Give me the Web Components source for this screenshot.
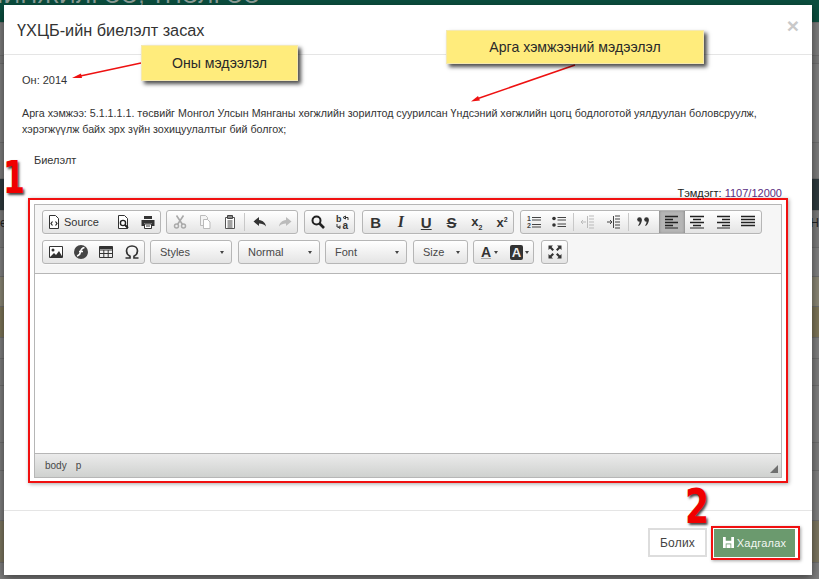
<!DOCTYPE html>
<html>
<head>
<meta charset="utf-8">
<title>Биелэлт засах</title>
<style>
  html, body { margin: 0; padding: 0; width: 819px; height: 579px; overflow: hidden; background: #7f7f7f; font-family: "Liberation Sans", Arial, sans-serif; }
</style>
</head>
<body>
<page-backdrop></page-backdrop>
<edit-modal>
  <span slot="title">ҮХЦБ-ийн биелэлт засах</span>
  <div class="year" style="margin-bottom:17px">Он: 2014</div>
  <div style="font-size:10.7px;line-height:16px;margin-bottom:15px">Арга хэмжээ: 5.1.1.1.1. төсвийг Монгол Улсын Мянганы хөгжлийн зорилтод суурилсан Үндсэний хөгжлийн цогц бодлоготой уялдуулан боловсруулж, хэрэгжүүлж байх эрх зүйн зохицуулалтыг бий болгох;</div>
  <div style="margin-left:12px;line-height:16px;margin-bottom:19px">Биелэлт</div>
  <div style="text-align:right;font-size:11px;line-height:13px;color:#222;padding-right:12px;margin-bottom:-2px">Тэмдэгт: <span style="color:#5a2d82">1107/12000</span></div>
  <rich-editor></rich-editor>
  <modal-button slot="footer">Болих</modal-button>
  <modal-button slot="footer" primary>Хадгалах</modal-button>
</edit-modal>
<note-layer></note-layer>

<script>
const icons = {
  doc: '<path d="M3.5 1.5h6l3 3v10h-9z" fill="#fff" stroke="#333"/><path d="M6.5 7.5l-1.5 2 1.5 2M9.5 7.5l1.5 2-1.5 2" fill="none" stroke="#222" stroke-width="1.2"/>',
  preview: '<path d="M3.5 1.5h6l3 3v10h-9z" fill="#fff" stroke="#333"/><circle cx="8" cy="9" r="2.6" fill="none" stroke="#222" stroke-width="1.4"/><path d="M10 11l3 3" stroke="#222" stroke-width="2"/>',
  print: '<path d="M4 2h8v3H4z" fill="#333"/><path d="M1.5 6h13v6H12V9.500H4V12H1.500z" fill="#333"/><path d="M4.500 10h7v4.500h-7z" fill="#fff" stroke="#333"/><path d="M6 12h4" stroke="#333"/>',
  cut: '<circle cx="4.500" cy="12" r="2" fill="none" stroke="#aaa" stroke-width="1.500"/><circle cx="11.500" cy="12" r="2" fill="none" stroke="#aaa" stroke-width="1.500"/><path d="M5.500 10.500L11.500 1.500M10.500 10.500L4.500 1.500" stroke="#aaa" stroke-width="1.600"/>',
  copy: '<path d="M3.500 1.500h5l2 2v8h-7z" fill="#f4f4f4" stroke="#bbb"/><path d="M6.500 5.500h4l2.500 2.500v6.500h-6.500z" fill="#fff" stroke="#bbb"/>',
  paste: '<path d="M3.500 3.500h9v11h-9z" fill="#fff" stroke="#555"/><path d="M5.500 1.500h5v3h-5z" fill="#888" stroke="#444"/><path d="M5.500 7h5M5.500 9h5M5.500 11h5M5.500 13h5" stroke="#444"/>',
  undo: '<path d="M7 3L1.500 7.500 7 12V9.500c3 0 5 .8 7 3-.4-3.500-3-6-7-6.500z" fill="#333"/>',
  redo: '<path d="M9 3l5.500 4.500L9 12V9.500c-3 0-5 .8-7 3 .4-3.500 3-6 7-6.500z" fill="#bbb"/>',
  find: '<circle cx="6.500" cy="6.500" r="4" fill="none" stroke="#222" stroke-width="2"/><path d="M9.500 9.500l4.500 4.500" stroke="#222" stroke-width="2.600"/>',
  replace: '<text x="1" y="8" font-size="9" font-weight="700" fill="#333" font-family="Liberation Sans">b</text><text x="7.500" y="15" font-size="10" font-weight="700" fill="#333" font-family="Liberation Sans">a</text><path d="M8 3.500l2.500-1.500v3zM10 3.500h3V6M2 10v3h3M5 11.500v3l-2-1.500" fill="none" stroke="#333"/>',
  ol: '<text x="1" y="7" font-size="7" font-weight="700" fill="#444" font-family="Liberation Sans">1</text><text x="1" y="14" font-size="7" font-weight="700" fill="#444" font-family="Liberation Sans">2</text><path d="M6 3.500h9M6 6h9M6 10.500h9M6 13h9" stroke="#444"/>',
  ul: '<circle cx="3" cy="4.500" r="1.800" fill="#333"/><circle cx="3" cy="11" r="1.800" fill="#333"/><path d="M6.500 3.500h8.500M6.500 6h8.500M6.500 10h8.500M6.500 12.500h8.500" stroke="#444"/>',
  outdent: '<path d="M9 2h5M9 5h5M9 8h5M9 11h5M9 14h5" stroke="#bbb"/><path d="M7.500 2v12" stroke="#bbb"/><path d="M6 8H1M3 6L1 8l2 2" fill="none" stroke="#bbb"/>',
  indent: '<path d="M9 2h5M9 5h5M9 8h5M9 11h5M9 14h5" stroke="#444"/><path d="M7.500 2v12" stroke="#444"/><path d="M1 8h5M4 6l2 2-2 2" fill="none" stroke="#444"/>',
  quote: '<circle cx="4.500" cy="5.500" r="2.300" fill="#333"/><path d="M6.800 5.500c0 3-1 5-3 6.500l-.7-.7c1-1 1.500-2.500 1.500-4z" fill="#333"/><circle cx="11.500" cy="5.500" r="2.300" fill="#333"/><path d="M13.800 5.500c0 3-1 5-3 6.500l-.7-.7c1-1 1.500-2.500 1.500-4z" fill="#333"/>',
  left: '<path d="M1 2.500h13M1 5.500h8M1 8.500h13M1 11.500h8" stroke="#222" stroke-width="1.300"/><path d="M1 14h13" stroke="#222"/>',
  center: '<path d="M1 2.500h14M4 5.500h8M1 8.500h14M4 11.500h8" stroke="#222" stroke-width="1.300"/><path d="M1 14h14" stroke="#222"/>',
  right: '<path d="M2 2.500h13M7 5.500h8M2 8.500h13M7 11.500h8" stroke="#222" stroke-width="1.300"/><path d="M2 14h13" stroke="#222"/>',
  justify: '<path d="M1 2.500h14M1 5.500h14M1 8.500h14M1 11.500h14" stroke="#222" stroke-width="1.500"/>',
  image: '<path d="M1.500 2.500h13v11h-13z" fill="#fff" stroke="#333"/><circle cx="5" cy="6" r="1.500" fill="#333"/><path d="M2 13l4-4 2 2 3-4 3.500 6z" fill="#333"/>',
  flash: '<circle cx="8" cy="8" r="7" fill="#444"/><path d="M11.500 3.500C8.500 4 8 5.500 7.500 8S6 11.500 4 12" fill="none" stroke="#fff" stroke-width="1.500"/><path d="M6 7.500h4" stroke="#fff" stroke-width="1.300"/>',
  table: '<path d="M1.500 2.500h13v11h-13zM1.500 6h13M1.500 9.500h13M5.800 6v7.500M10.200 6v7.500" fill="none" stroke="#333"/><path d="M1.500 2.500h13V5h-13z" fill="#333"/>',
  omega: '<path d="M1.500 14h4.500v-1.800C3.800 11 2.500 9 2.500 7c0-3 2.300-5 5.500-5s5.500 2 5.500 5c0 2-1.300 4-3.500 5.200V14h4.500" fill="none" stroke="#333" stroke-width="1.700"/>',
  max: '<path d="M1.500 1.500h4.500L4.500 3l2.500 2.500L5.500 7 3 4.500 1.500 6zM14.500 1.500H10L11.500 3 9 5.500 10.500 7 13 4.500 14.500 6zM1.500 14.500H6L4.500 13 7 10.500 5.500 9 3 11.500 1.500 10zM14.500 14.500H10l1.500-1.500L9 10.500 10.500 9l2.500 2.500 1.500-1.500z" fill="#333"/>'
};

class PageBackdrop extends HTMLElement {
  constructor() {
    super();
    this.attachShadow({ mode: "open" });
  }
  connectedCallback() {
    // what shows of the page behind the dialog
    const rows = [
      [39, "#0b4f3f"], [33, "#7d7d7d"], [8, "#7a7a7a"], [79, "#7f7f7f"], [36, "#7c7c7c"],
      [32, "#2e3a3e"], [37, "#7b7b7b"], [29, "#808080"], [30, "#8a8674"], [31, "#7d7558"],
      [21, "#7f7f7f"], [27, "#7d7d7d"], [57, "#7f7f7f"], [28, "#7d7d7d"], [50, "#7f7f7f"], [42, "#7c7660"]
    ];
    this.shadowRoot.innerHTML = `
      <style>
        :host { display: block; width: 819px; height: 579px; overflow: hidden; position: relative; }
        .row { border-bottom: 1px solid #6e6e6e; box-sizing: border-box; }
        .head { font: 23px/23px "Liberation Sans", sans-serif; color: #8f9f99; white-space: nowrap; margin: -16px 0 0 -18px; letter-spacing: .4px; }
        .edge { display: flex; justify-content: space-between; font-size: 12px; color: #222; padding-right: 0; }
      </style>
      ${rows.map(([h, c], i) => `<div class="row" style="height:${h}px;background:${c}">
        ${i === 0 ? '<div class="head">ШИНЖИЛГЭЭ, ҮНЭЛГЭЭ</div>' : ""}
        ${i === 6 ? '<div class="edge" style="line-height:24px"><span>е</span><span>Н</span></div>' : ""}
      </div>`).join("")}`;
  }
}

class EditModal extends HTMLElement {
  constructor() {
    super();
    this.attachShadow({ mode: "open" });
    this.shadowRoot.innerHTML = `
      <style>
        :host { position: absolute; left: 4px; top: 5px; width: 808px; height: 570px; background: #fff; display: flex; flex-direction: column; box-shadow: 0 3px 9px rgba(0,0,0,.5); color: #333; font: 11px/16px "Liberation Sans", sans-serif; }
        header { height: 50px; flex: none; box-sizing: border-box; border-bottom: 1px solid #e5e5e5; padding: 15px 13px 0 13px; display: flex; justify-content: space-between; }
        h4 { margin: 0; font-size: 16.3px; font-weight: 400; line-height: 21px; color: #333; }
        .close { font-size: 21px; font-weight: 700; line-height: 12px; color: #c9c9c9; }
        main { flex: 1; padding: 17px 18px 0 18px; }
        footer { height: 65px; flex: none; box-sizing: border-box; border-top: 1px solid #e5e5e5; padding-top: 17px; padding-right: 12px; display: flex; justify-content: flex-end; gap: 4px; }
      </style>
      <header><h4><slot name="title"></slot></h4><span class="close">×</span></header>
      <main><slot></slot></main>
      <footer><slot name="footer"></slot></footer>`;
  }
}

class ModalButton extends HTMLElement {
  constructor() {
    super();
    this.attachShadow({ mode: "open" });
  }
  connectedCallback() {
    const primary = this.hasAttribute("primary");
    this.shadowRoot.innerHTML = `
      <style>
        :host { display: block; }
        .frame { display: block; }
        :host([primary]) .frame { border: 2px solid #f01010; padding: 1px 3px 1px 1px; margin-top: -2px; box-shadow: 1px 1px 3px rgba(0,0,0,.35); }
        .btn { box-sizing: border-box; display: flex; align-items: center; justify-content: center; gap: 3px; height: 29px; width: 59px; border: 2px solid #ddd; background: #fff; color: #444; font-size: 12px; letter-spacing: .2px; }
        :host([primary]) .btn { width: 81px; height: 28px; background: #6b9a6e; border-color: #6b9a6e; color: #f2f6f2; font-size: 11px; }
        svg { width: 11px; height: 11px; margin-top: -2px; }
      </style>
      <div class="frame"><div class="btn">
        ${primary ? '<svg viewBox="0 0 12 12"><path d="M0 0h12v12H0z" fill="#fff"/><path d="M3 0h6v4H3zM3 7h6v5H3z" fill="#6b9a6e"/><path d="M3.800 8h4.400v4H3.800z" fill="#fff"/></svg>' : ""}
        <slot></slot></div></div>`;
  }
}

class CkButton extends HTMLElement {
  constructor() {
    super();
    this.attachShadow({ mode: "open" });
  }
  connectedCallback() {
    const name = this.getAttribute("icon");
    this.shadowRoot.innerHTML = `
      <style>
        :host { display: flex; align-items: center; justify-content: center; height: 22px; width: var(--w, 25.300px); flex: none; color: #333; }
        :host([active]) { background: #b5b5b5; box-shadow: inset 0 0 3px rgba(0,0,0,.4); margin: -1px 0; height: 24px; }
        svg { width: 16px; height: 16px; display: block; }
      </style>
      ${name ? `<svg viewBox="0 0 16 16">${icons[name]}</svg>` : ""}<slot></slot>`;
  }
}

class CkGroup extends HTMLElement {
  constructor() {
    super();
    this.attachShadow({ mode: "open" });
    this.shadowRoot.innerHTML = `
      <style>
        :host { display: flex; align-items: center; height: 24px; box-sizing: border-box; border: 1px solid #b6b6b6; border-radius: 3px; background: linear-gradient(#fff, #e4e4e4); box-shadow: 0 1px 0 rgba(255,255,255,.5); overflow: hidden; flex: none; }
      </style><slot></slot>`;
  }
}

class CkCombo extends HTMLElement {
  constructor() {
    super();
    this.attachShadow({ mode: "open" });
    this.shadowRoot.innerHTML = `
      <style>
        :host { display: flex; align-items: center; justify-content: space-between; height: 24px; box-sizing: border-box; border: 1px solid #b6b6b6; border-radius: 3px; background: linear-gradient(#fff, #e4e4e4); padding: 0 7px 0 9px; font-size: 11px; color: #484848; flex: none; }
        i { width: 0; height: 0; border: 2.500px solid transparent; border-top: 3px solid #444; border-bottom: 0; }
      </style><slot></slot><i></i>`;
  }
}

class RichEditor extends HTMLElement {
  constructor() {
    super();
    this.attachShadow({ mode: "open" });
    const sep = '<b class="sep"></b>';
    this.shadowRoot.innerHTML = `
      <style>
        :host { display: block; box-sizing: border-box; margin: 0 6px; width: 760px; height: 285px; border: 2px solid #f01010; padding: 4px 4px 3px 4px; box-shadow: 1px 1px 4px rgba(0,0,0,.35); }
        .box { height: 100%; box-sizing: border-box; border: 1px solid #b6b6b6; display: flex; flex-direction: column; }
        .tools { height: 69px; flex: none; box-sizing: border-box; background: #f6f6f6; border-bottom: 1px solid #b6b6b6; padding: 5px 0 0 7px; display: flex; flex-direction: column; gap: 6px; font: 11px "Liberation Sans", sans-serif; }
        .line { display: flex; gap: 5px; }
        .sep { width: 1px; height: 18px; margin: 0 1.500px; background: #c8c8c8; flex: none; display: block; }
        .area { flex: 1; background: #fff; }
        .status { height: 24px; flex: none; background: linear-gradient(#ebebeb, #cfd1cf); border-top: 1px solid #b6b6b6; box-sizing: border-box; padding-left: 10px; display: flex; align-items: center; justify-content: space-between; gap: 9px; font: 10px "Liberation Sans", sans-serif; color: #484848; }
        .path { display: flex; gap: 9px; }
        .grip { width: 0; height: 0; border-style: solid; border-width: 0 0 8px 8px; border-color: transparent transparent #6f6f6f transparent; margin: 7px 3px 0 0; }
        .src { --w: 67px; gap: 2px; justify-content: flex-start; padding-left: 3px; box-sizing: border-box; }
        .mark { font: 700 15px "Liberation Sans", sans-serif; color: #333; }
      </style>
      <div class="box">
        <div class="tools">
          <div class="line">
            <ck-group style="width:119px"><ck-button class="src" icon="doc">Source</ck-button><ck-button icon="preview"></ck-button><ck-button icon="print"></ck-button></ck-group>
            <ck-group style="width:132px"><ck-button icon="cut"></ck-button><ck-button icon="copy"></ck-button><ck-button icon="paste"></ck-button>${sep}<ck-button icon="undo"></ck-button><ck-button icon="redo"></ck-button></ck-group>
            <ck-group style="width:51px;margin-left:1px"><ck-button icon="find"></ck-button><ck-button icon="replace"></ck-button></ck-group>
            <ck-group style="width:152px;margin-left:2px">
              <ck-button><span class="mark">B</span></ck-button>
              <ck-button><span class="mark" style="font:italic 700 16px 'Liberation Serif',serif">I</span></ck-button>
              <ck-button><span class="mark" style="text-decoration:underline">U</span></ck-button>
              <ck-button><span class="mark" style="text-decoration:line-through">S</span></ck-button>
              <ck-button><span class="mark" style="font-size:13px">x<sub style="font-size:7px">2</sub></span></ck-button>
              <ck-button><span class="mark" style="font-size:13px">x<sup style="font-size:7px;vertical-align:5px;line-height:0">2</sup></span></ck-button>
            </ck-group>
            <ck-group style="width:242px;margin-left:1px">
              <ck-button icon="ol"></ck-button><ck-button icon="ul"></ck-button>${sep}<ck-button icon="outdent"></ck-button><ck-button icon="indent"></ck-button>${sep}<ck-button icon="quote" style="margin-right:4px"></ck-button>
              <ck-button icon="left" active></ck-button><ck-button icon="center"></ck-button><ck-button icon="right"></ck-button><ck-button icon="justify"></ck-button>
            </ck-group>
          </div>
          <div class="line">
            <ck-group style="width:103px"><ck-button icon="image"></ck-button><ck-button icon="flash"></ck-button><ck-button icon="table"></ck-button><ck-button icon="omega"></ck-button></ck-group>
            <ck-combo style="width:82px">Styles</ck-combo>
            <ck-combo style="width:82px;margin-left:1px">Normal</ck-combo>
            <ck-combo style="width:82px">Font</ck-combo>
            <ck-combo style="width:55px;margin-left:1px">Size</ck-combo>
            <ck-group style="width:61px">
              <ck-button style="--w:31px"><span class="mark" style="font-size:14px;text-decoration:underline;text-decoration-color:#aaa;margin-right:3px">A</span><i style="border:2.500px solid transparent;border-top:3px solid #444;border-bottom:0"></i></ck-button>
              <ck-button style="--w:29px"><span class="mark" style="font-size:13px;line-height:15px;background:#333;color:#eee;padding:0 2px;border-radius:2px;margin-right:2px">A</span><i style="border:2.500px solid transparent;border-top:3px solid #444;border-bottom:0"></i></ck-button>
            </ck-group>
            <ck-group style="width:27px;margin-left:2px"><ck-button icon="max"></ck-button></ck-group>
          </div>
        </div>
        <div class="area"></div>
        <div class="status"><div class="path"><span>body</span><span>p</span></div><div class="grip"></div></div>
      </div>`;
  }
}

class NoteLayer extends HTMLElement {
  constructor() {
    super();
    this.attachShadow({ mode: "open" });
    this.shadowRoot.innerHTML = `
      <style>
        :host { position: absolute; left: 0; top: 0; width: 819px; height: 579px; pointer-events: none; }
        .note { position: absolute; display: flex; align-items: center; justify-content: center; box-sizing: border-box; background: #ffec7c; border: 1px solid #f5e9b0; box-shadow: 3px 3px 4px rgba(0,0,0,.7); font: 14.100px "Liberation Sans", sans-serif; color: #2a2a2a; }
        .num { position: absolute; font: 900 45px/45px "DejaVu Sans", sans-serif; color: #f00000; text-shadow: 2px 2px 3px rgba(0,0,0,.75); transform-origin: 0 0; }
        svg { position: absolute; left: 0; top: 0; }
      </style>
      <svg width="819" height="579" viewBox="0 0 819 579">
        <path d="M141 63L78 76.500" stroke="#ee1111" stroke-width="1.500"/><path d="M72 78l9-4.500 1 4.500z" fill="#ee1111"/>
        <path d="M575 65L478 98.500" stroke="#ee1111" stroke-width="1.500"/><path d="M471 101.500l7-5.500 2 4.500z" fill="#ee1111"/>
      </svg>
      <div class="note" style="left:141px;top:45px;width:157px;height:36px">Оны мэдээлэл</div>
      <div class="note" style="left:446px;top:30px;width:258px;height:34px">Арга хэмжээний мэдээлэл</div>
      <span class="num" style="left:3px;top:155px;transform:scaleX(.7)">1</span>
      <span class="num" style="left:685px;top:484px;font-size:48px;transform:scaleX(.72)">2</span>`;
  }
}

customElements.define("page-backdrop", PageBackdrop);
customElements.define("edit-modal", EditModal);
customElements.define("modal-button", ModalButton);
customElements.define("ck-button", CkButton);
customElements.define("ck-group", CkGroup);
customElements.define("ck-combo", CkCombo);
customElements.define("rich-editor", RichEditor);
customElements.define("note-layer", NoteLayer);
</script>
</body>
</html>
